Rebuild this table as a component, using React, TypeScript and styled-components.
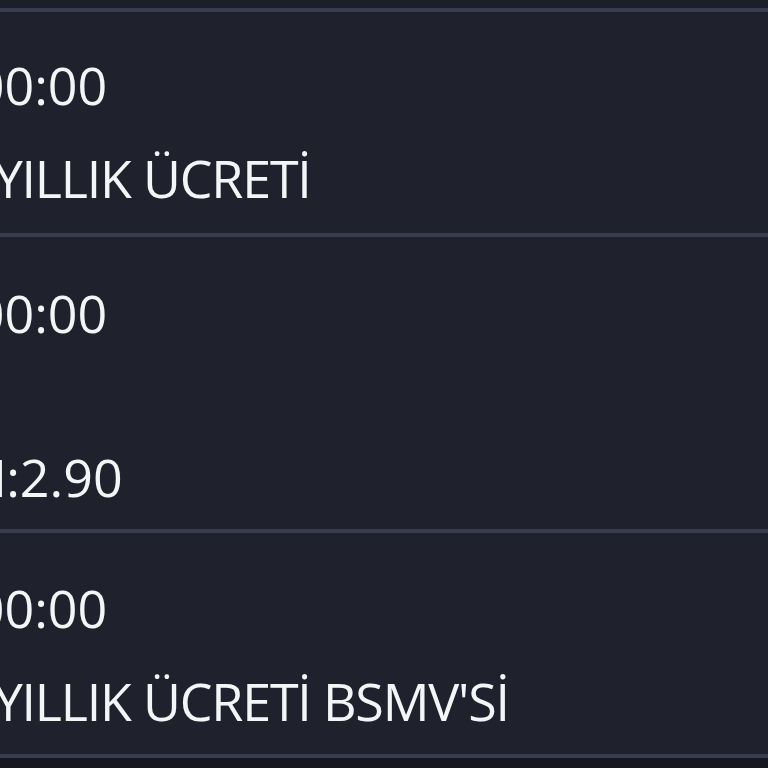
import React from "react";
import styled, { createGlobalStyle } from "styled-components";

const Global = createGlobalStyle`
  html, body { margin: 0; padding: 0; background: #16171f; }
  body { font-family: "Open Sans", "Noto Sans", sans-serif; }
`;

const Screen = styled.div`
  width: 768px;
  height: 768px;
  overflow: hidden;
  background: #16171f;
  display: flex;
  flex-direction: column;
`;

const TopStrip = styled.div`
  height: 8px;
  background: #1c1e2a;
  flex: none;
`;

const Row = styled.div<{ $pt: number; $pb: number }>`
  flex: none;
  border-top: 4px solid #393b4e;
  background: #1f222d;
  padding: ${(p) => p.$pt}px 0 ${(p) => p.$pb}px 0;
  overflow: hidden;
`;

const LastRule = styled.div`
  flex: none;
  height: 4px;
  background: #393b4e;
`;

const Values = styled.div`
  margin-left: -304px;
  display: flex;
  flex-direction: column;
`;

const Line = styled.div<{ $h?: number }>`
  height: ${(p) => p.$h ?? 93}px;
  line-height: 93px;
  font-size: 52px;
  color: #f4f5f7;
  white-space: nowrap;
`;

const Label = styled.span<{ $ls?: number }>`
  letter-spacing: ${(p) => p.$ls ?? -1.2}px;
`;

export default function App() {
  return (
    <Screen>
      <Global />
      <TopStrip />
      <Row $pt={26} $pb={9}>
        <Values>
          <Line>12.09.2024 00:00</Line>
          <Line>
            <Label>KREDİ KARTI YILLIK ÜCRETİ</Label>
          </Line>
        </Values>
      </Row>
      <Row $pt={29} $pb={6}>
        <Values>
          <Line>12.09.2024 00:00</Line>
          <Line $h={71} />
          <Line>
            <Label $ls={-0.75}>İŞLEM ORANI</Label>:2.90
          </Line>
        </Values>
      </Row>
      <Row $pt={28} $pb={7}>
        <Values>
          <Line>12.09.2024 00:00</Line>
          <Line>
            <Label>KREDİ KARTI YILLIK ÜCRETİ BSMV'Sİ</Label>
          </Line>
        </Values>
      </Row>
      <LastRule />
    </Screen>
  );
}
